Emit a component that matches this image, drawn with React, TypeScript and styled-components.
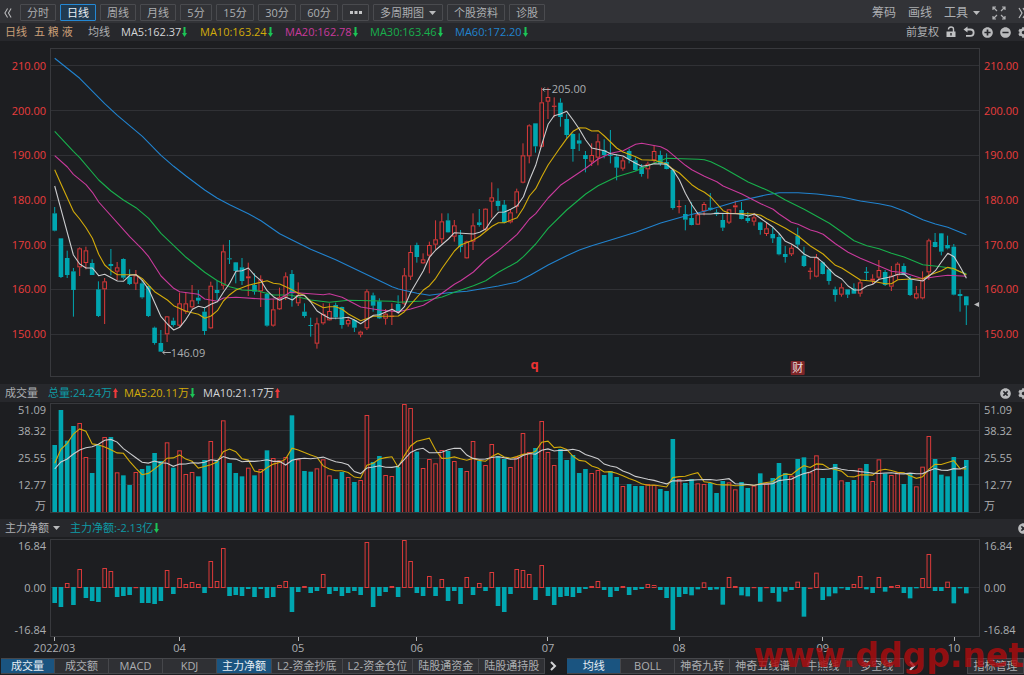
import React, { useEffect, useRef, useState } from "react";
import styled, { createGlobalStyle } from "styled-components";
import { FaCog, FaMinusCircle, FaPlusCircle, FaTimesCircle } from "react-icons/fa";

const c = {
  bg: "#1d1e21",
  bar: "#323337",
  sub: "#27282c",
  line: "#303135",
  frame: "#38393d",
  text: "#acaeb1",
  light: "#d4d5d7",
  teal: "#00a6b0",
  tealText: "#0e9aa5",
  red: "#dc3a3a",
  redText: "#ea3d3d",
  green: "#18b04c",
  yellow: "#d3ab0a",
  pink: "#c93a9c",
  blue: "#2183cf",
  white: "#cbccce",
  active: "#1a5480",
};

const GlobalStyle = createGlobalStyle`
  * { box-sizing: border-box; }
  body {
    margin: 0;
    background: ${c.bg};
    color: ${c.text};
    font-family: "Open Sans", "Noto Sans CJK SC", sans-serif;
    font-size: 11px;
    line-height: 16px;
  }
  button { font: inherit; color: inherit; margin: 0; padding: 0; border: 0; background: none; white-space: nowrap; }
`;

const Page = styled.main`
  position: relative;
  min-height: 100vh;
  overflow: hidden;
`;

const Toolbar = styled.nav`
  display: flex;
  align-items: center;
  gap: 4px;
  height: 23px;
  padding: 2px 0 0 4px;
  background: ${c.bar};
`;

const PeriodButton = styled.button<{ $active?: boolean; $min?: number }>`
  display: flex;
  align-items: center;
  justify-content: center;
  gap: 5px;
  height: 17px;
  min-width: ${(p) => p.$min ?? 36}px;
  padding: 0 6px;
  border: 1px solid ${(p) => (p.$active ? "#2488d4" : "#4a4b4f")};
  border-radius: 1px;
  background: ${(p) => (p.$active ? "#203a50" : "transparent")};
  color: ${(p) => (p.$active ? "#e8edf2" : c.text)};
  line-height: 15px;
`;

const IconButton = styled.button<{ $w?: number }>`
  display: flex;
  align-items: center;
  justify-content: center;
  flex: none;
  width: ${(p) => p.$w ?? 12}px;
  height: 16px;
  color: #b9babc;
`;

const BackButton = styled(IconButton)`
  width: 8px;
  margin-right: 4px;
`;

const ToolGroup = styled.div<{ $gap: number; $bleed: number }>`
  display: flex;
  align-items: center;
  gap: ${(p) => p.$gap}px;
  margin-left: auto;
  margin-right: -${(p) => p.$bleed}px;
`;

const ToolButton = styled.button`
  display: flex;
  align-items: center;
  gap: 5px;
  font-size: 12px;
`;

const InfoBar = styled.header`
  display: flex;
  align-items: center;
  height: 18px;
  padding-left: 5px;
  background: ${c.sub};
`;

const InfoText = styled.span<{ $color?: string; $w?: number }>`
  display: flex;
  align-items: center;
  gap: 1px;
  min-width: ${(p) => p.$w ?? 0}px;
  color: ${(p) => p.$color ?? c.text};
  white-space: pre;
`;

const PanelPicker = styled.button`
  display: flex;
  align-items: center;
  gap: 4px;
  width: 65px;
`;

const Panel = styled.section<{ $top: number; $bottom: number }>`
  display: grid;
  grid-template-columns: 50px minmax(0, 1fr) 44px;
  padding: ${(p) => p.$top}px 0 ${(p) => p.$bottom}px;
`;

const Scale = styled.div<{ $side: "left" | "right" }>`
  display: flex;
  flex-direction: column;
  justify-content: space-between;
  text-align: ${(p) => (p.$side === "left" ? "right" : "left")};
  padding: 0 4px;
  line-height: 14px;
  white-space: nowrap;
`;

const PriceScale = styled(Scale)`
  padding-top: 11px;
  padding-bottom: 36px;
  color: ${c.redText};
`;

const VolumeScale = styled(Scale)`
  display: grid;
  grid-template: 14px 27px 27px 27px 15px / 1fr;
  align-items: center;
`;

const Plot = styled.div<{ $h: number }>`
  height: ${(p) => p.$h}px;
  min-width: 0;
  svg { display: block; }
`;

const TimeAxis = styled.div`
  display: flex;
  height: 20px;
  padding: 0 58px 0 54px;
`;

const AxisSpan = styled.div<{ $grow: number }>`
  flex: ${(p) => p.$grow} 1 0;
  min-width: 0;
`;

const AxisLabel = styled.div`
  display: flex;
  flex-direction: column;
  align-items: center;
  width: 1px;
  line-height: 14px;
  white-space: nowrap;
  &::before { content: ""; width: 1px; height: 4px; background: #b5b6b8; }
`;

const Tabs = styled.nav`
  display: flex;
  align-items: center;
  height: 17px;
  padding-left: 1px;
`;

const Tab = styled.button<{ $active?: boolean }>`
  flex: none;
  height: 16px;
  min-width: 54px;
  padding: 0 5px;
  border: 1px solid #46474b;
  border-left-width: 0;
  background: ${(p) => (p.$active ? c.active : "#2f3034")};
  color: ${(p) => (p.$active ? "#e6edf3" : c.text)};
  line-height: 14px;
`;

const MoreTabs = styled.button`
  display: flex;
  align-items: center;
  justify-content: center;
  flex: none;
  width: 16px;
  margin-right: 6px;
  color: #d2d3d5;
`;

const ManageButton = styled(Tab)`
  margin-left: auto;
  border-left-width: 1px;
  min-width: 57px;
`;

const Watermark = styled.div`
  position: absolute;
  right: 0;
  top: 638px;
  color: rgba(172, 12, 14, 0.82);
  font: bold 33px/36px "DejaVu Sans", sans-serif;
  pointer-events: none;
`;

const Caret = () => (
  <svg width="7" height="4" viewBox="0 0 7 4" aria-hidden="true">
    <path d="M0 0h7L3.500 4z" fill="#b9babc" />
  </svg>
);

const Trend = ({ up }: { up?: boolean }) => (
  <svg width="5" height="10" viewBox="0 0 5 10" aria-hidden="true">
    <path
      d={up ? "M2.500 0L5 4H3.500V10H1.500V4H0z" : "M2.500 10L5 6H3.500V0H1.500V6H0z"}
      fill={up ? "#f03a3a" : "#1cc455"}
    />
  </svg>
);

const DoubleChevron = ({ right }: { right?: boolean }) => (
  <svg width="9" height="12" viewBox="0 0 9 12" fill="none" stroke="#b9babc" strokeWidth="1.200" aria-hidden="true">
    <path d={right ? "M1 1L4 6L1 11M5 1L8 6L5 11" : "M4 1L1 6L4 11M8 1L5 6L8 11"} />
  </svg>
);

const Chevron = () => (
  <svg width="7" height="10" viewBox="0 0 7 10" fill="none" stroke="currentColor" strokeWidth="2" aria-hidden="true">
    <path d="M1 1L5 5L1 9" />
  </svg>
);

const Expand = () => (
  <svg width="14" height="14" viewBox="0 0 14 14" fill="none" stroke="#b0b1b3" strokeWidth="1.200" aria-hidden="true">
    <path d="M1 4V1H4M1 1L5 5M10 1H13V4M13 1L9 5M1 10V13H4M1 13L5 9M10 13H13V10M13 13L9 9" />
  </svg>
);

const Lock = () => (
  <svg width="10" height="12" viewBox="0 0 10 12" aria-hidden="true">
    <path d="M2.500 3.500V3A2.500 2 0 0 1 7.500 3V6" fill="none" stroke="#c0c1c3" strokeWidth="1.400" />
    <path d="M0.500 5.500h9V11h-9zM4.300 7v2.500h1.400V7z" fill="#c0c1c3" fillRule="evenodd" />
  </svg>
);

const Undo = () => (
  <svg width="12" height="12" viewBox="0 0 12 12" fill="none" stroke="#c0c1c3" strokeWidth="1.800" aria-hidden="true">
    <path d="M3 3.500H7.500A3 3 0 0 1 7.500 9.800H3" />
    <path d="M0.500 3.500L4.500 0.500V6.500z" fill="#c0c1c3" stroke="none" />
  </svg>
);

/* Candles: direction, then high, body top, body bottom, low in chart units (three per pixel). */
const CANDLES = `d501,520,572,574 d595,595,711,714 d632,654,705,714 d684,694,750,830 u622,625,682,708 u620,631,669,688
d658,669,705,705 d724,748,828,831 u714,724,748,852 d627,672,678,706 u666,682,695,720 d655,657,713,718 d688,711,732,735
u690,706,731,750 d720,730,772,776 d738,738,828,831 d860,863,909,914 d870,909,935,935 u828,829,883,906 d833,842,855,860
u758,790,857,862 u758,790,815,822 u735,781,802,806 d750,773,782,792 d803,815,873,885 u725,737,865,867 d722,750,759,780
u614,634,737,748 d600,655,657,672 d666,667,693,730 d654,682,723,735 u668,709,715,768 d700,735,755,764 u706,718,754,801
d757,762,857,860 u778,808,857,860 u743,772,808,810 u697,709,770,780 d690,702,760,800 u727,765,790,798 d790,815,828,833
d833,855,858,890 u833,850,911,926 u790,822,850,854 u790,813,841,842 d788,795,832,838 d800,801,855,866 u833,840,853,860
d838,840,863,876 u872,875,884,892 u748,754,865,870 d758,766,797,815 d775,784,835,837 u807,821,836,854 u790,827,829,855
d766,792,815,820 u684,706,791,795 u616,636,710,720 d608,615,651,668 u640,658,670,672 u605,615,647,700 u541,598,614,628
u520,544,598,610 d520,541,577,578 u540,556,590,605 d570,585,621,637 u602,604,655,656 u520,556,605,630 d507,547,555,560
u505,506,569,572 u427,472,485,533 d445,483,498,512 d480,494,548,550 u507,517,547,550 u446,454,500,520 u310,346,428,430
u253,256,349,370 d250,250,319,338 u143,187,320,322 u143,171,185,237 u172,197,199,232 d175,188,231,260 d222,237,285,295
d280,282,327,365 d280,301,311,333 d333,345,357,397 u310,345,365,378 u282,304,353,376 d298,330,345,355 d270,345,348,370
d343,350,383,421 u352,361,386,392 d326,333,357,370 d352,361,390,392 d372,380,402,410 u365,371,388,416 u316,333,361,370
d332,345,372,378 d340,366,387,388 d385,390,504,509 u480,498,500,520 d495,522,539,571 d487,534,555,556 u518,523,554,555
u486,492,514,526 d459,503,509,512 d508,517,523,528 d520,540,563,573 u507,508,548,552 u483,496,502,520 d486,510,537,538
d516,534,543,549 u520,532,545,557 d545,547,570,584 u548,565,582,588 d562,582,595,609 d580,591,643,646 d618,642,651,668
u616,623,643,648 d563,587,614,625 d620,647,678,681 u683,692,694,718 u642,652,710,712 d664,667,702,703 d688,688,723,734
d740,748,765,785 u730,742,764,770 d748,748,764,774 d730,745,761,762 u720,727,761,770 d681,695,699,720 u703,716,722,732
u660,690,713,718 d690,696,735,738 u678,707,740,753 u667,671,706,718 d670,678,704,706 d708,717,765,768 u738,760,775,778
u694,720,775,778 u596,601,697,720 d579,606,621,622 d579,580,635,646 d587,615,625,628 d612,620,764,766 d748,762,768,815
d768,769,796,855`
  .split(/\s+/)
  .map((s) => ({ up: s[0] === "u", v: s.slice(1).split(",").map(Number) }));

/* Average lines: x,y pairs in chart units. */
const PRICE_LINES: [string, string][] = [
  [c.blue, `44,55 119,115 194,191 232,226 307,289 363,346 401,379 438,408 494,450 532,475 569,494 625,521 663,542 719,581 750,597
  812,628 887,659 1000,713 1056,740 1075,747 1131,760 1168,766 1225,758 1281,754 1375,738 1431,726 1470,706 1524,675 1580,647
  1618,630 1655,617 1712,600 1787,577 1862,549 1936,528 1993,514 2087,485 2180,464 2218,458 2274,458 2330,462 2405,471 2461,483
  2517,491 2554,499 2592,513 2648,539 2686,552 2723,562 2779,584`],
  [c.green, `44,274 100,334 119,353 176,420 213,453 250,480 288,503 326,535 363,580 438,652 494,697 532,722 569,740 606,750 650,752
  700,765 750,765 812,780 868,787 925,781 1056,784 1075,787 1150,783 1206,771 1243,757 1300,737 1337,722 1375,697 1431,666
  1450,650 1487,612 1524,565 1580,510 1637,462 1674,437 1730,410 1787,393 1843,369 1880,355 1974,358 1993,359 2012,365 2049,383
  2124,426 2180,450 2199,459 2236,480 2292,508 2368,550 2405,576 2442,602 2480,617 2517,626 2554,640 2592,651 2648,674 2704,680
  2723,683 2779,701`],
  [c.pink, `44,347 82,381 100,403 138,434 157,457 176,486 269,590 307,628 326,650 363,708 401,745 419,755 475,763 494,777 532,784
  550,774 588,772 681,778 719,776 750,757 850,764 868,761 906,772 962,801 1018,810 1075,815 1112,807 1150,796 1187,773 1243,733
  1262,722 1300,696 1337,660 1375,632 1412,600 1431,583 1450,560 1468,537 1487,521 1524,474 1561,436 1637,385 1674,357 1712,340
  1749,332 1787,313 1805,310 1862,320 1880,329 1936,376 1955,389 1993,409 2030,425 2049,438 2105,462 2162,491 2199,508 2217,522
  2254,547 2274,553 2311,570 2330,575 2349,583 2386,611 2424,637 2461,655 2517,678 2554,694 2592,698 2648,716 2686,710 2723,706
  2779,709`],
  [c.yellow, `44,389 63,432 100,514 119,537 138,563 157,595 176,643 194,675 213,692 232,704 288,704 307,716 344,755 382,780 401,797
  438,814 475,823 494,835 513,828 532,812 550,783 569,764 588,750 625,736 681,722 700,730 719,732 750,746 775,760 793,766 812,784
  850,803 868,800 887,800 906,808 925,822 962,842 1000,829 1075,828 1093,815 1150,750 1168,737 1187,715 1206,685 1243,633
  1262,615 1300,600 1319,589 1356,559 1375,548 1393,548 1431,533 1450,504 1468,468 1487,446 1506,408 1524,375 1561,322 1580,296
  1599,274 1618,263 1637,264 1655,273 1674,272 1693,288 1730,324 1749,336 1787,350 1805,359 1843,361 1880,372 1899,388 1918,399
  1955,434 1974,447 1993,457 2012,471 2049,512 2068,520 2143,522 2162,526 2180,536 2199,545 2236,565 2274,588 2311,618 2349,642
  2386,676 2405,684 2461,720 2498,724 2536,731 2554,731 2573,719 2611,717 2648,716 2667,706 2704,692 2723,682 2742,686 2779,704`],
  [c.white, `44,438 63,508 100,645 119,672 138,684 157,684 176,707 194,703 232,723 250,724 269,706 288,704 307,722 326,748 363,830
  382,852 401,870 419,862 438,838 457,808 475,799 494,803 513,793 532,785 550,757 569,730 588,694 606,692 625,684 644,706 663,722
  681,752 700,770 719,781 738,772 757,780 775,766 793,766 812,786 831,813 850,825 868,835 906,834 925,832 943,840 962,851 1000,826
  1018,824 1037,816 1056,808 1075,819 1093,800 1112,757 1150,692 1168,652 1187,630 1225,597 1243,578 1300,582 1319,577 1337,567
  1356,538 1375,517 1393,516 1412,508 1431,497 1450,470 1468,421 1487,376 1506,310 1524,253 1542,227 1561,222 1580,214 1599,240
  1618,268 1637,300 1655,324 1693,332 1712,341 1749,348 1768,359 1787,370 1805,379 1824,376 1843,371 1880,373 1899,390 1918,420
  1936,460 1955,494 1974,522 2012,522 2030,520 2087,521 2105,523 2124,528 2143,522 2180,548 2199,562 2217,580 2236,604 2254,612
  2274,625 2292,642 2311,652 2330,652 2349,668 2368,688 2386,706 2405,717 2424,738 2442,750 2461,750 2480,738 2498,733 2517,718
  2554,710 2573,703 2592,702 2611,717 2629,720 2648,723 2667,708 2686,692 2704,666 2723,640 2742,650 2761,682 2779,715`],
];

/* Top edge of each volume bar, chart units. */
const VOLUME = [
  195, 90, 182, 138, 129, 231, 279, 195, 171, 171, 277, 286, 315, 276, 267, 257, 219, 243, 187, 263, 211, 282, 276, 289, 240,
  183, 243, 121, 249, 279, 289, 263, 286, 267, 211, 234, 241, 231, 106, 238, 273, 275, 265, 238, 286, 297, 276, 291, 306, 300,
  105, 246, 228, 285, 288, 261, 72, 84, 215, 264, 237, 250, 210, 213, 243, 264, 273, 183, 243, 255, 192, 228, 237, 261, 231, 159,
  216, 204, 123, 216, 255, 207, 240, 225, 279, 267, 279, 270, 285, 273, 291, 318, 312, 318, 318, 312, 315, 327, 333, 177, 297,
  309, 297, 310, 312, 309, 339, 303, 307, 328, 306, 324, 317, 280, 310, 294, 249, 279, 287, 237, 232, 277, 226, 294, 294, 252,
  301, 306, 300, 265, 252, 303, 238, 280, 285, 277, 312, 282, 319, 260, 168, 237, 284, 289, 231, 289, 240,
];

/* Net inflow per session, chart units above or below zero. */
const FLOW = [
  -48, -60, 15, -54, 57, -33, -42, -45, 60, 51, -30, -27, -24, 3, -48, -48, -51, -42, 54, -21, 30, 12, 18, 12, -18, 81, 21, 120,
  -27, -24, -27, -6, -30, -6, -33, -30, 9, 21, -75, -15, 6, -18, -12, 42, -21, -12, -27, -18, -12, -24, 138, -60, -27, -15, 6,
  -30, 144, 81, -18, -27, 36, -27, 27, -42, -12, -51, 33, -24, 15, -12, 48, -57, -75, -21, 57, 54, 42, -39, 69, -27, -54, -30,
  -27, -30, -18, -6, 6, 21, -9, -30, -12, 6, -24, -9, -6, 12, 9, -9, -33, -129, -30, -21, -25, -7, 17, -9, -7, -53, 33, 6, -25,
  -28, 3, -44, 3, -18, -44, -14, -9, 19, -89, 1, 46, -39, -28, -19, -4, -9, 12, 36, -7, -18, 33, -14, 6, 9, -18, -34, -4, 30,
  102, -12, -12, 19, -49, -4, -19,
];

const MONTHS: [string, number][] = [
  ["2022/03", 20], ["04", 19], ["05", 19], ["06", 21], ["07", 21], ["08", 23], ["09", 21], ["10", 2],
];

function average(values: number[], n: number, lead: number[]) {
  return values.map((_, i) =>
    i < n - 1 ? lead[i] : values.slice(i - n + 1, i + 1).reduce((a, b) => a + b, 0) / n
  );
}

const VOL_MA5 = average(VOLUME, 5, [250, 208, 190, 162]);
const VOL_MA10 = average(VOLUME, 10, [267, 246, 237, 222, 210, 203, 200, 193, 181]);

function PlotArea({ height, label, draw }: {
  height: number;
  label: string;
  draw: (x: (i: number) => number, width: number) => React.ReactNode;
}) {
  const ref = useRef<HTMLDivElement>(null);
  const [width, setWidth] = useState(930);
  useEffect(() => {
    const el = ref.current;
    if (!el) return;
    const observer = new ResizeObserver(() => setWidth(el.clientWidth));
    observer.observe(el);
    return () => observer.disconnect();
  }, []);
  const x = (i: number) => 4.7 + (i * (width - 18.4)) / 146;
  return (
    <Plot ref={ref} $h={height}>
      <svg width={width} height={height} role="img" aria-label={label}>
        {draw(x, width)}
        <rect x="0.5" y="0.5" width={Math.max(0, width - 1)} height={height - 1} fill="none" stroke={c.frame} />
      </svg>
    </Plot>
  );
}

function Bar({ x, top, bottom, up }: { x: number; top: number; bottom: number; up: boolean }) {
  const h = Math.max(1, bottom - top);
  return up ? (
    <rect x={x - 1.8} y={top + 0.5} width={3.6} height={Math.max(0.2, h - 1)} fill={c.bg} stroke={c.red} />
  ) : (
    <rect x={x - 2.3} y={top} width={4.6} height={h} fill={c.teal} />
  );
}

const GridLines = ({ rows, width }: { rows: number[]; width: number }) => (
  <>
    {rows.map((y) => <path key={y} d={`M0 ${y}H${width}`} stroke={c.line} />)}
  </>
);

const PriceChart = () => (
  <PlotArea
    height={329}
    label="日线"
    draw={(x, width) => (
      <>
        <GridLines rows={[17.5, 62.5, 107.5, 152.5, 197.5, 241.5, 286.5]} width={width} />
        {CANDLES.map(({ up, v }, i) => {
          const [hi, top, bot, lo] = v.map((n) => n / 3 - 8);
          return (
            <g key={i}>
              <path d={`M${x(i)} ${hi}V${top}M${x(i)} ${bot}V${lo}`} stroke={up ? c.red : c.teal} />
              <Bar x={x(i)} top={top} bottom={bot} up={up} />
            </g>
          );
        })}
        {PRICE_LINES.map(([color, pts]) => (
          <polyline
            key={color}
            fill="none"
            stroke={color}
            strokeWidth="1.1"
            strokeLinejoin="round"
            points={pts.trim().split(/\s+/).map((p) => {
              const [px, py] = p.split(",").map(Number);
              return `${x((px - 44) / 18.73).toFixed(1)},${(py / 3 - 8).toFixed(1)}`;
            }).join(" ")}
          />
        ))}
        <path d={`M${x(78) + 1} 41.500h8m-6 -2l-2 2l2 2`} fill="none" stroke={c.text} />
        <text x={x(78) + 10} y="45" fill={c.text}>205.00</text>
        <path d={`M${x(17) + 2} 304.500h8m-6 -2l-2 2l2 2`} fill="none" stroke={c.text} />
        <text x={x(17) + 10} y="309" fill={c.text}>146.09</text>
        <text x={x(77) - 5} y="321" fill="#ee3333" fontSize="13" fontWeight="bold">q</text>
        <rect x={x(119) - 7} y="313" width="14" height="14" rx="1" fill="#7d2528" />
        <text x={x(119)} y="324" fill="#eadcdc" textAnchor="middle">财</text>
        <path d={`M${width - 6} 256.500l6 -3v6z`} fill="#b9babc" />
      </>
    )}
  />
);

const VolumeChart = () => (
  <PlotArea
    height={110}
    label="成交量"
    draw={(x, width) => (
      <>
        <GridLines rows={[27.5, 55.5, 81.5]} width={width} />
        {VOLUME.map((v, i) => <Bar key={i} x={x(i)} top={v / 3 - 23} bottom={110} up={CANDLES[i].up} />)}
        {[[VOL_MA5, c.yellow] as const, [VOL_MA10, c.white] as const].map(([line, color]) => (
          <polyline
            key={color}
            fill="none"
            stroke={color}
            strokeWidth="1.1"
            points={line.map((v, i) => `${x(i).toFixed(1)},${(v / 3 - 23).toFixed(1)}`).join(" ")}
          />
        ))}
      </>
    )}
  />
);

const FlowChart = () => (
  <PlotArea
    height={98}
    label="主力净额"
    draw={(x, width) => (
      <>
        <GridLines rows={[48.5]} width={width} />
        {FLOW.map((v, i) => (
          <Bar key={i} x={x(i)} top={v > 0 ? 49 - v / 3 : 48} bottom={v > 0 ? 49 : 48 - v / 3} up={v > 0} />
        ))}
      </>
    )}
  />
);

const PERIODS: [string, number][] = [
  ["分时", 36], ["日线", 36], ["周线", 36], ["月线", 36], ["5分", 32], ["15分", 38], ["30分", 38], ["60分", 38],
];
const AVERAGES: [string, string, number][] = [
  ["MA5:162.37", c.light, 79], ["MA10:163.24", c.yellow, 85], ["MA20:162.78", c.pink, 85],
  ["MA30:163.46", c.green, 85], ["MA60:172.20", c.blue, 85],
];
const PRICES = ["210.00", "200.00", "190.00", "180.00", "170.00", "160.00", "150.00"];
const VOLUMES = ["51.09", "38.32", "25.55", "12.77", "万"];
const FLOWS = ["16.84", "0.00", "-16.84"];
const INDICATORS = ["成交量", "成交额", "MACD", "KDJ", "主力净额", "L2-资金抄底", "L2-资金仓位", "陆股通资金", "陆股通持股"];
const OVERLAYS = ["均线", "BOLL", "神奇九转", "神奇五线谱", "牛熊线", "多空线"];

const labels = (items: string[]) => items.map((t) => <span key={t}>{t}</span>);

export default function App() {
  return (
    <>
      <GlobalStyle />
      <Page>
        <Toolbar>
          <BackButton aria-label="收起"><DoubleChevron /></BackButton>
          {PERIODS.map(([t, w]) => <PeriodButton key={t} $min={w} $active={t === "日线"}>{t}</PeriodButton>)}
          <PeriodButton $min={27} aria-label="更多周期">
            <svg width="12" height="3" viewBox="0 0 12 3" fill="#c4c5c7" aria-hidden="true">
              <path d="M0 0h3v3H0zM4.500 0h3v3h-3zM9 0h3v3H9z" />
            </svg>
          </PeriodButton>
          <PeriodButton $min={69}>多周期图 <Caret /></PeriodButton>
          <PeriodButton>个股资料</PeriodButton>
          <PeriodButton>诊股</PeriodButton>
          <ToolGroup $gap={12} $bleed={3}>
            <ToolButton>筹码</ToolButton>
            <ToolButton>画线</ToolButton>
            <ToolButton>工具 <Caret /></ToolButton>
            <IconButton aria-label="全屏" $w={14}><Expand /></IconButton>
            <IconButton aria-label="展开" $w={9}><DoubleChevron right /></IconButton>
          </ToolGroup>
        </Toolbar>
        <InfoBar>
          <InfoText $color="#c99f78" $w={29}>日线</InfoText>
          <InfoText $color="#c99f78" $w={54}>五 粮 液</InfoText>
          <InfoText $w={33}>均线</InfoText>
          {AVERAGES.map(([t, color, w]) => <InfoText key={t} $color={color} $w={w}>{t}<Trend /></InfoText>)}
          <ToolGroup $gap={6} $bleed={5}>
            <button>前复权</button>
            <IconButton aria-label="锁定"><Lock /></IconButton>
            <IconButton aria-label="撤销"><Undo /></IconButton>
            <IconButton aria-label="放大"><FaPlusCircle size={11} /></IconButton>
            <IconButton aria-label="缩小"><FaMinusCircle size={11} /></IconButton>
            <IconButton aria-label="设置"><FaCog size={11} /></IconButton>
          </ToolGroup>
        </InfoBar>
        <Panel $top={7} $bottom={7}>
          <PriceScale $side="left">{labels(PRICES)}</PriceScale>
          <PriceChart />
          <PriceScale $side="right">{labels(PRICES)}</PriceScale>
        </Panel>
        <InfoBar>
          <InfoText $w={43}>成交量</InfoText>
          <InfoText $color={c.tealText} $w={76}>总量:24.24万<Trend up /></InfoText>
          <InfoText $color={c.yellow} $w={79}>MA5:20.11万<Trend /></InfoText>
          <InfoText $color={c.light}>MA10:21.17万<Trend up /></InfoText>
          <ToolGroup $gap={6} $bleed={5}>
            <IconButton aria-label="关闭"><FaTimesCircle size={11} /></IconButton>
            <IconButton aria-label="设置"><FaCog size={11} /></IconButton>
          </ToolGroup>
        </InfoBar>
        <Panel $top={1} $bottom={6}>
          <VolumeScale $side="left">{labels(VOLUMES)}</VolumeScale>
          <VolumeChart />
          <VolumeScale $side="right">{labels(VOLUMES)}</VolumeScale>
        </Panel>
        <InfoBar>
          <PanelPicker>主力净额 <Caret /></PanelPicker>
          <InfoText $color={c.tealText}>主力净额:-2.13亿<Trend /></InfoText>
          <ToolGroup $gap={6} $bleed={5}>
            <IconButton aria-label="关闭"><FaTimesCircle size={11} /></IconButton>
          </ToolGroup>
        </InfoBar>
        <Panel $top={2} $bottom={0}>
          <Scale $side="left">{labels(FLOWS)}</Scale>
          <FlowChart />
          <Scale $side="right">{labels(FLOWS)}</Scale>
        </Panel>
        <TimeAxis>
          {MONTHS.map(([t, n]) => <AxisSpan key={t} $grow={n}><AxisLabel>{t}</AxisLabel></AxisSpan>)}
        </TimeAxis>
        <Tabs>
          {INDICATORS.map((t) => <Tab key={t} $active={t === "成交量" || t === "主力净额"}>{t}</Tab>)}
          <MoreTabs aria-label="更多指标"><Chevron /></MoreTabs>
          {OVERLAYS.map((t) => <Tab key={t} $active={t === "均线"}>{t}</Tab>)}
          <MoreTabs aria-label="更多均线"><Chevron /></MoreTabs>
          <ManageButton>指标管理</ManageButton>
        </Tabs>
        <Watermark>www.ddgp.net</Watermark>
      </Page>
    </>
  );
}
